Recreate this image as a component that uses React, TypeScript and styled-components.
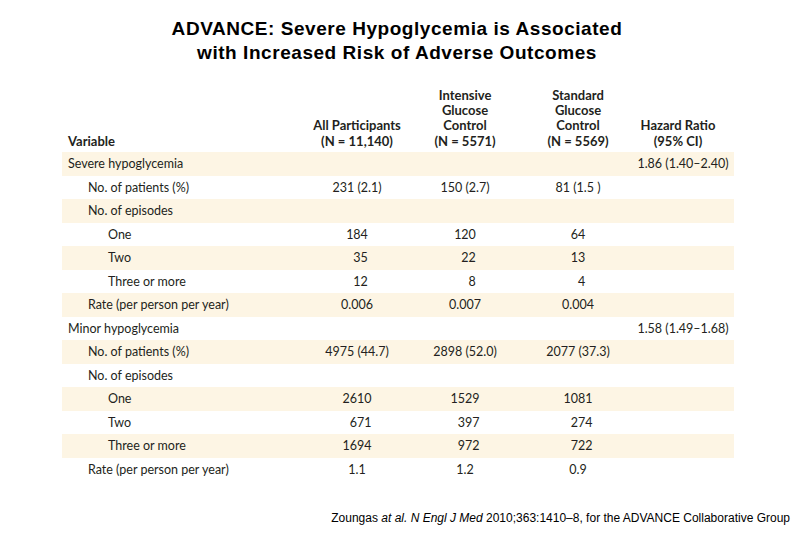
import React from 'react';
import styled, { createGlobalStyle } from 'styled-components';

const GlobalStyle = createGlobalStyle`
  html, body {
    margin: 0;
    padding: 0;
    background: #ffffff;
  }
  body {
    width: 810px;
    height: 540px;
    overflow: hidden;
  }
`;

const Slide = styled.div`
  width: 810px;
  height: 540px;
  display: flex;
  flex-direction: column;
  background: #ffffff;
`;

const Title = styled.h1`
  margin: 0;
  padding: 17px 16px 0 0;
  font-family: 'Liberation Sans', Arial, sans-serif;
  font-weight: bold;
  font-size: 19px;
  line-height: 24px;
  letter-spacing: 0.55px;
  text-align: center;
  color: #000000;
`;

const Table = styled.div`
  margin: 21px 0 0 62px;
  width: 672px;
  display: grid;
  grid-template-columns: 236px 118px 98px 128px 92px;
  font-family: Lato, 'Open Sans', sans-serif;
  font-size: 12.5px;
  color: #231f20;
  font-variant-numeric: tabular-nums;
`;

const HeadCell = styled.div<{ $left?: boolean; $padRight?: number }>`
  display: flex;
  flex-direction: column;
  justify-content: flex-end;
  align-items: ${(p) => (p.$left ? 'flex-start' : 'center')};
  padding-left: ${(p) => (p.$left ? '6px' : '0')};
  padding-right: ${(p) => p.$padRight ?? 0}px;
  padding-bottom: 3px;
  font-weight: bold;
  font-size: 13px;
  line-height: 15.3px;
  text-align: center;
  white-space: nowrap;
  height: 66px;
  box-sizing: border-box;
`;

const Cell = styled.div<{ $shade: boolean; $indent?: number; $padRight?: number }>`
  height: 23.5px;
  display: flex;
  align-items: center;
  justify-content: ${(p) => (p.$indent !== undefined ? 'flex-start' : 'center')};
  padding-left: ${(p) => (p.$indent !== undefined ? 6 + p.$indent * 20 : 0)}px;
  padding-right: ${(p) => p.$padRight ?? 0}px;
  background: ${(p) => (p.$shade ? '#fdf5e4' : '#ffffff')};
  white-space: nowrap;
`;

const Num = styled.span<{ $ch: number }>`
  display: inline-block;
  min-width: ${(p) => p.$ch}ch;
  text-align: right;
`;

const Footer = styled.div`
  margin-top: auto;
  padding: 0 20px 15px 0;
  text-align: right;
  font-family: 'Liberation Sans', Arial, sans-serif;
  font-size: 12px;
  color: #000000;
`;

type Row = {
  label: string;
  indent: number;
  values: string[];
  episode?: boolean;
};

const rows: Row[] = [
  { label: 'Severe hypoglycemia', indent: 0, values: ['', '', '', '1.86 (1.40–2.40)'] },
  { label: 'No. of patients (%)', indent: 1, values: ['231 (2.1)', '150 (2.7)', '81 (1.5 )', ''] },
  { label: 'No. of episodes', indent: 1, values: ['', '', '', ''] },
  { label: 'One', indent: 2, values: ['184', '120', '64', ''], episode: true },
  { label: 'Two', indent: 2, values: ['35', '22', '13', ''], episode: true },
  { label: 'Three or more', indent: 2, values: ['12', '8', '4', ''], episode: true },
  { label: 'Rate (per person per year)', indent: 1, values: ['0.006', '0.007', '0.004', ''] },
  { label: 'Minor hypoglycemia', indent: 0, values: ['', '', '', '1.58 (1.49–1.68)'] },
  { label: 'No. of patients (%)', indent: 1, values: ['4975 (44.7)', '2898 (52.0)', '2077 (37.3)', ''] },
  { label: 'No. of episodes', indent: 1, values: ['', '', '', ''] },
  { label: 'One', indent: 2, values: ['2610', '1529', '1081', ''], episode: true },
  { label: 'Two', indent: 2, values: ['671', '397', '274', ''], episode: true },
  { label: 'Three or more', indent: 2, values: ['1694', '972', '722', ''], episode: true },
  { label: 'Rate (per person per year)', indent: 1, values: ['1.1', '1.2', '0.9', ''] },
];

// widest number among the episode rows of the same section, per column
const episodeWidth = (rowIndex: number, col: number) => {
  let start = rowIndex;
  while (start > 0 && rows[start - 1].episode) start--;
  let end = rowIndex;
  while (end < rows.length - 1 && rows[end + 1].episode) end++;
  let w = 0;
  for (let i = start; i <= end; i++) w = Math.max(w, rows[i].values[col].length);
  return w;
};

const App: React.FC = () => (
  <Slide>
    <GlobalStyle />
    <Title>
      ADVANCE: Severe Hypoglycemia is Associated
      <br />
      with Increased Risk of Adverse Outcomes
    </Title>
    <Table>
      <HeadCell $left>Variable</HeadCell>
      <HeadCell>
        <span>All Participants</span>
        <span>(N = 11,140)</span>
      </HeadCell>
      <HeadCell>
        <span>Intensive</span>
        <span>Glucose</span>
        <span>Control</span>
        <span>(N = 5571)</span>
      </HeadCell>
      <HeadCell>
        <span>Standard</span>
        <span>Glucose</span>
        <span>Control</span>
        <span>(N = 5569)</span>
      </HeadCell>
      <HeadCell $padRight={20}>
        <span>Hazard Ratio</span>
        <span>(95% CI)</span>
      </HeadCell>
      {rows.map((row, i) => {
        const shade = i % 2 === 0;
        return (
          <React.Fragment key={i}>
            <Cell $shade={shade} $indent={row.indent}>
              {row.label}
            </Cell>
            {row.values.slice(0, 3).map((v, c) => (
              <Cell $shade={shade} key={c}>
                {row.episode ? <Num $ch={episodeWidth(i, c)}>{v}</Num> : v}
              </Cell>
            ))}
            <Cell $shade={shade} $padRight={10}>
              {row.values[3]}
            </Cell>
          </React.Fragment>
        );
      })}
    </Table>
    <Footer>
      Zoungas <i>at al.</i> <i>N Engl J Med</i> 2010;363:1410–8, for the ADVANCE Collaborative Group
    </Footer>
  </Slide>
);

export default App;
